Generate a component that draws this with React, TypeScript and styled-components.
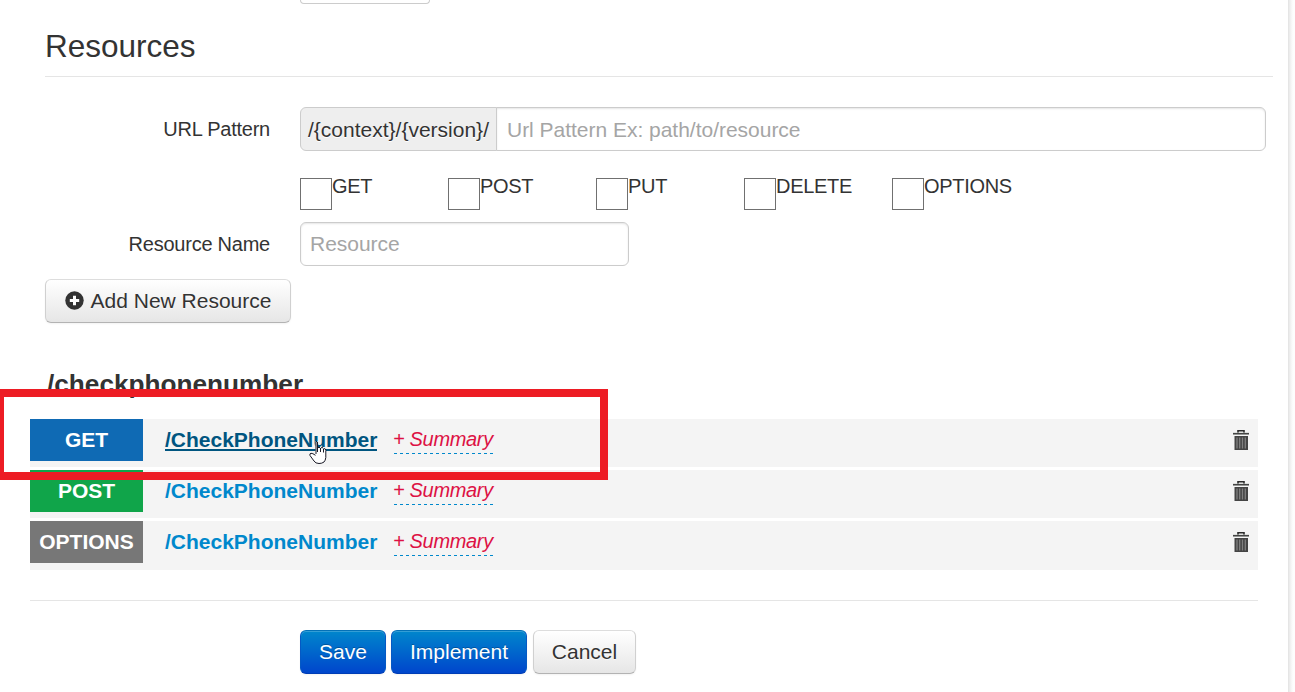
import React from "react";
import styled, { createGlobalStyle, css } from "styled-components";

const Global = createGlobalStyle`
  * { box-sizing: border-box; }
  body { margin: 0; background: #fff; overflow: hidden; font-family: "Liberation Sans", Arial, sans-serif; color: #333; }
`;

const Page = styled.main`
  position: relative;
  display: flex;
  flex-direction: column;
  width: 1289px;
  height: 692px;
  overflow: hidden;
  border-right: 1px solid #e5e5e5;
`;
const Shell = styled.div`
  width: 1295px;
  height: 692px;
  overflow: hidden;
  background: linear-gradient(to right, transparent 1289px, #e9e9e9 1289px, #f4f4f4 1291px, #fdfdfd 1293px);
`;
const PreviousField = styled.div`
  width: 130px;
  height: 4px;
  flex: none;
  margin-left: 300px;
  border: 1px solid #ccc;
  border-top: 0;
  border-radius: 0 0 5px 5px;
`;
const Legend = styled.h2`
  margin: 0 0 30px 45px;
  width: 1228px;
  height: 73px;
  flex: none;
  padding-top: 11px;
  border-bottom: 1px solid #e5e5e5;
  font-size: 31.5px;
  font-weight: 400;
  line-height: 62px;
`;
const FormRow = styled.div`
  display: flex;
  flex: none;
  height: 44px;
`;
const Label = styled.label`
  width: 270px;
  margin-right: 30px;
  text-align: right;
  font-size: 20px;
  letter-spacing: -0.24px;
  line-height: 44px;
`;
const AddOn = styled.span`
  width: 197px;
  padding-left: 7px;
  background: #eee;
  border: 1px solid #ccc;
  border-radius: 6px 0 0 6px;
  font-size: 21px;
  line-height: 44px;
  white-space: nowrap;
  text-shadow: 0 1px 0 #fff;
`;
const Input = styled.input<{ $width: number; $joined?: boolean }>`
  width: ${(p) => p.$width}px;
  height: 44px;
  margin: 0 0 0 ${(p) => (p.$joined ? -1 : 0)}px;
  padding: ${(p) => (p.$joined ? "2px 9px 0 10px" : "0 9px")};
  border: 1px solid #ccc;
  border-radius: ${(p) => (p.$joined ? "0 6px 6px 0" : "6px")};
  box-shadow: inset 0 1px 2px rgba(0, 0, 0, 0.1);
  font: 21px "Liberation Sans", Arial, sans-serif;
  letter-spacing: -0.02px;
  &::placeholder { color: #a5a5a5; opacity: 1; }
`;
const Methods = styled.div`
  display: flex;
  flex: none;
  height: 71px;
  padding: 27px 0 0 300px;
`;
const Method = styled.label`
  display: flex;
  width: 148px;
  font-size: 20px;
  letter-spacing: -0.3px;
  line-height: 16px;
`;
const Check = styled.input`
  appearance: none;
  width: 32px;
  height: 32px;
  margin: 0;
  border: 1px solid #707070;
  background: #fff;
`;
const Button = styled.button<{ $width: number; $primary?: boolean }>`
  display: flex;
  align-items: center;
  justify-content: center;
  width: ${(p) => p.$width}px;
  height: 44px;
  padding: 0;
  border: 1px solid;
  border-color: #ddd #d0d0d0 #b3b3b3;
  border-radius: 6px;
  background: linear-gradient(#fff, #e6e6e6);
  box-shadow: inset 0 1px 0 rgba(255, 255, 255, 0.2), 0 1px 2px rgba(0, 0, 0, 0.05);
  color: #333;
  font: 21px "Liberation Sans", Arial, sans-serif;
  text-shadow: 0 1px 1px rgba(255, 255, 255, 0.75);
  white-space: nowrap;
  ${(p) =>
    p.$primary &&
    css`
      border-color: #0471b7 #0559c4 #003db5;
      background: linear-gradient(#08c, #04c) border-box;
      color: #fff;
      text-shadow: 0 -1px 0 rgba(0, 0, 0, 0.25);
    `}
`;
const AddArea = styled.div`
  display: flex;
  flex: none;
  height: 101px;
  padding: 13px 0 0 45px;
  svg { margin: -1px 7px 0 0; }
`;
const Group = styled.h3`
  flex: none;
  height: 52px;
  margin: 0 0 0 47px;
  font-size: 26.2px;
  line-height: 34px;
`;
const List = styled.div`
  display: flex;
  flex-direction: column;
  flex: none;
  gap: 3px;
  width: 1228px;
  height: 182px;
  margin-left: 30px;
  border-bottom: 1px solid #e5e5e5;
`;
const ResourceRow = styled.div<{ $last: boolean }>`
  display: flex;
  height: ${(p) => (p.$last ? 49 : 48)}px;
  background: #f4f4f4;
`;
const Verb = styled.span<{ $color: string }>`
  width: 113px;
  height: 42px;
  background: ${(p) => p.$color};
  color: #fff;
  font-size: 21px;
  font-weight: 700;
  line-height: 42px;
  text-align: center;
`;
const Path = styled.a<{ $hover: boolean }>`
  width: 212px;
  height: 33px;
  margin-left: 22px;
  color: ${(p) => (p.$hover ? "#005580" : "#08c")};
  font-size: 21px;
  font-weight: 700;
  line-height: 42px;
  background: ${(p) => (p.$hover ? "linear-gradient(#005580, #005580) 0 30px / 100% 2px no-repeat" : "none")};
`;
const Summary = styled.a`
  width: 99px;
  height: 35px;
  margin-left: 17px;
  color: #dd1144;
  font-size: 20px;
  font-style: italic;
  letter-spacing: -0.33px;
  line-height: 40px;
  text-indent: -1px;
  white-space: nowrap;
  background: repeating-linear-gradient(to right, #08c 0 3px, transparent 3px 6px) 0 34px / 100% 1px no-repeat;
`;
const Delete = styled.span`
  display: flex;
  margin: 11px 9px 0 auto;
`;
const Actions = styled.div`
  display: flex;
  flex: none;
  padding: 29px 0 0 300px;
  gap: 5px;
  button:last-child { margin-left: 1px; }
`;
const Highlight = styled.div`
  position: absolute;
  left: -4px;
  top: 389px;
  width: 612px;
  height: 91px;
  border: 8px solid #ed1c24;
`;
const Pointer = styled.svg`
  position: absolute;
  left: 309px;
  top: 440px;
`;

const PlusIcon = () => (
  <svg width="19" height="19" viewBox="0 0 19 19">
    <circle cx="9.5" cy="9.5" r="9.2" fill="#333" />
    <path d="M9.5 4.8v9.4M4.8 9.5h9.4" stroke="#fff" strokeWidth="3" />
  </svg>
);
const TrashIcon = () => (
  <svg width="16" height="20" viewBox="0 0 16 20">
    <path d="M5 3V.8h6V3" fill="none" stroke="#2b2b2b" strokeWidth="1.6" />
    <path d="M0 2.5h16V5H0z" fill="#c9ccc9" />
    <path d="M0 3h16v1.400H0z" fill="#444" />
    <path d="M1.500 6h13.500v14h-13.500z" fill="#444" />
    <path d="M4 7.500v11M6.700 7.500v11M9.500 7.500v11M12.300 7.500v11" stroke="#808080" strokeWidth="1.300" />
  </svg>
);

const methods = ["GET", "POST", "PUT", "DELETE", "OPTIONS"];
const resources = [
  { verb: "GET", color: "#0f6ab4" },
  { verb: "POST", color: "#10a54a" },
  { verb: "OPTIONS", color: "#777777" },
];

export default function App() {
  return (
    <Shell>
      <Global />
      <Page>
        <PreviousField />
        <Legend>Resources</Legend>
        <FormRow>
          <Label>URL Pattern</Label>
          <AddOn>{"/{context}/{version}/"}</AddOn>
          <Input $width={770} $joined placeholder="Url Pattern Ex: path/to/resource" />
        </FormRow>
        <Methods>
          {methods.map((m) => (
            <Method key={m}>
              <Check type="checkbox" />
              {m}
            </Method>
          ))}
        </Methods>
        <FormRow>
          <Label>Resource Name</Label>
          <Input $width={329} placeholder="Resource" />
        </FormRow>
        <AddArea>
          <Button $width={246}>
            <PlusIcon />
            Add New Resource
          </Button>
        </AddArea>
        <Group>/checkphonenumber</Group>
        <List>
          {resources.map((r, i) => (
            <ResourceRow key={r.verb} $last={i === 2}>
              <Verb $color={r.color}>{r.verb}</Verb>
              <Path $hover={i === 0}>/CheckPhoneNumber</Path>
              <Summary>+ Summary</Summary>
              <Delete>
                <TrashIcon />
              </Delete>
            </ResourceRow>
          ))}
        </List>
        <Actions>
          <Button $width={86} $primary>Save</Button>
          <Button $width={136} $primary>Implement</Button>
          <Button $width={103}>Cancel</Button>
        </Actions>
        <Highlight />
        <Pointer width="18" height="25" viewBox="0 0 18 25">
          <path
            d="M6.500 15V2q0-1 1-1t1 1v6q1.300-1 2.600 0 1.300-1 2.600 0.300 1.200-.6 2.200 0Q17 8.700 17 10v7q0 3-2 5-2 1.500-5 1.500-3.500 0-5-2.500L.8 15.500Q.4 13.500 2 13.200q1.500-.2 3 1.800z"
            fill="#fff"
          />
          <path
            d="M7 14V2M7 1.500h1M8.500 2v10M11.500 8v4M14.500 8.500v4M9 7.500h2M12 7.700h2M15 8.500q1.800 0 1.800 2v7q-.3 3-1.800 4.500-2 1.500-5 1.500-3.500 0-5-2.500L1 15.500Q.4 13.500 2 13.300q1.500-.2 4.500 2"
            fill="none"
            stroke="#1a1a26"
            strokeWidth="1"
          />
        </Pointer>
      </Page>
    </Shell>
  );
}
